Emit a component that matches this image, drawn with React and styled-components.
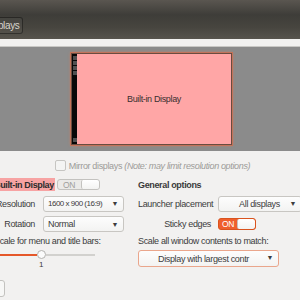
import styled, { createGlobalStyle } from 'styled-components';

const Global = createGlobalStyle`
  html, body {
    margin: 0;
    padding: 0;
    background: #f2f1f0;
    overflow: hidden;
  }
  body {
    font-family: "Liberation Sans", Arial, sans-serif;
    font-size: 9px;
    letter-spacing: -0.35px;
    color: #3c3c3c;
  }
`;

const Window = styled.div`
  width: 300px;
  height: 300px;
  overflow: hidden;
  display: flex;
  flex-direction: column;
`;

const HeaderBar = styled.div`
  height: 39px;
  flex: none;
  box-sizing: border-box;
  padding-top: 17px;
  background: linear-gradient(#5a5650 0%, #3e3d39 38%, #47453f 70%, #57544d 100%);
`;

const HeaderButton = styled.div`
  margin-left: -19px;
  width: 42px;
  height: 17px;
  box-sizing: border-box;
  border: 1px solid rgba(0, 0, 0, 0.4);
  border-radius: 3px;
  background: rgba(255, 255, 255, 0.03);
  color: #d8d4cc;
  font-size: 10px;
  display: flex;
  align-items: center;
  justify-content: center;
`;

const Strip = styled.div`
  height: 7px;
  flex: none;
  background: #f2f1f0;
`;

const Canvas = styled.div`
  height: 105px;
  flex: none;
  box-sizing: border-box;
  border-top: 1px solid #c9c8c5;
  background: #8b8b8b;
  display: flex;
  align-items: center;
  justify-content: center;
  padding-left: 3px;
`;

const Monitor = styled.div`
  width: 161px;
  height: 92px;
  box-sizing: border-box;
  border: 1px solid #6a4c40;
  box-shadow: 0 0 0 1px #c2735a, 0 0 3px #e07a52;
  background: #ffa6a6;
  display: flex;
`;

const Launcher = styled.div`
  width: 5px;
  background: #080808;
  display: flex;
  flex-direction: column;
  align-items: center;
  gap: 1px;
  padding: 2px 0 2px;
`;

const LauncherIcon = styled.div`
  width: 4px;
  height: 4px;
  background: #505050;
  margin-top: ${(p) => (p.$bottom ? 'auto' : '0')};
`;

const MonitorLabel = styled.div`
  flex: 1;
  display: flex;
  align-items: center;
  justify-content: center;
  font-size: 9px;
  color: #3a3030;
`;

const Content = styled.div`
  flex: 1;
  display: flex;
  flex-direction: column;
`;

const MirrorRow = styled.div`
  margin-top: 9px;
  height: 11px;
  display: flex;
  align-items: center;
  justify-content: center;
  gap: 3px;
  padding-left: 5px;
  color: #9c9b98;
`;

const Checkbox = styled.div`
  width: 9px;
  height: 9px;
  border: 1px solid #c6c5c2;
  border-radius: 2px;
  background: #f4f4f3;
`;

const Note = styled.span`
  font-style: italic;
`;

const Columns = styled.div`
  margin-top: 7px;
  display: flex;
  gap: 14px;
`;

const LeftColumn = styled.div`
  margin-left: -6px;
  width: 130px;
  flex: none;
  display: grid;
  grid-template-columns: 41px 81px;
  grid-template-rows: 13px 17px 16px 10px auto;
  column-gap: 8px;
  row-gap: 4px;
  align-items: center;
`;

const RightColumn = styled.div`
  flex: 1;
  display: grid;
  grid-template-columns: 73px 84px;
  grid-template-rows: 13px 17px 16px 10px auto;
  column-gap: 7px;
  row-gap: 4px;
  align-items: center;
`;

const NameRow = styled.div`
  grid-column: 1 / 3;
  display: flex;
  align-items: center;
  gap: 2px;
`;

const NameTag = styled.div`
  height: 13px;
  padding-right: 1px;
  background: #f7a3a3;
  font-weight: bold;
  color: #2c2c2c;
  display: flex;
  align-items: center;
  white-space: nowrap;
`;

const Heading = styled.div`
  grid-column: 1 / 3;
  font-weight: bold;
  color: #3a3a3a;
`;

const Label = styled.div`
  text-align: ${(p) => (p.$left ? 'left' : 'right')};
  white-space: nowrap;
`;

const Switch = styled.div`
  display: flex;
  height: ${(p) => (p.$on ? '12px' : '11px')};
  width: ${(p) => (p.$on ? '38px' : '43px')};
  box-sizing: border-box;
  border: 1px solid ${(p) => (p.$on ? '#d9531e' : '#c3c2bf')};
  border-radius: 3px;
  overflow: hidden;
  background: ${(p) => (p.$on ? '#ef5f2c' : '#ebeae8')};
  justify-self: start;
`;

const SwitchText = styled.div`
  flex: 1;
  display: flex;
  align-items: center;
  padding-left: ${(p) => (p.$on ? '3px' : '5px')};
  font-size: 8.5px;
  color: ${(p) => (p.$on ? '#ffffff' : '#a09f9c')};
`;

const Knob = styled.div`
  width: 17px;
  background: linear-gradient(#ffffff, #f3f3f2);
  border-left: 1px solid #c3c2bf;
  border-radius: 2px;
`;

const Select = styled.div`
  height: 16px;
  box-sizing: border-box;
  border: 1px solid ${(p) => (p.$focus ? '#eaa68c' : '#c8c6c2')};
  border-radius: 3px;
  background: linear-gradient(#fdfdfd, #f3f3f2);
  display: flex;
  align-items: center;
  padding: 0 5px 0 4px;
  justify-content: ${(p) => (p.$center ? 'center' : 'space-between')};
  position: relative;
  white-space: nowrap;
`;

const Tight = styled.span`
  font-size: 8px;
  letter-spacing: -0.5px;
`;

const Arrow = styled.span`
  font-size: 7px;
  color: #3c3c3c;
  ${(p) => (p.$abs ? 'position: absolute; right: 5px; top: 3px;' : '')}
`;

const ScaleLabel = styled.div`
  grid-column: 1 / 3;
  white-space: nowrap;
`;

const SliderBox = styled.div`
  grid-column: 1 / 3;
  margin-left: -6px;
  width: 107px;
  display: flex;
  flex-direction: column;
  align-items: flex-start;
  align-self: start;
`;

const Track = styled.div`
  width: 100%;
  height: 9px;
  display: flex;
  align-items: center;
`;

const Fill = styled.div`
  height: 2px;
  background: ${(p) => (p.$active ? '#e5582a' : '#d2d1ce')};
  flex: ${(p) => (p.$active ? 'none' : '1')};
  width: ${(p) => (p.$active ? '49px' : 'auto')};
`;

const Thumb = styled.div`
  width: 7px;
  height: 7px;
  flex: none;
  border: 1px solid #b3b2af;
  border-radius: 50%;
  background: #fbfbfb;
`;

const TickValue = styled.div`
  margin-left: 51px;
  font-size: 8px;
  margin-top: 1px;
`;

const WideSelect = styled(Select)`
  grid-column: 1 / 3;
  align-self: start;
  width: 141px;
  height: 17px;
  justify-content: flex-start;
  padding-left: 19px;
`;

const CornerButton = styled.div`
  margin-top: 11px;
  margin-left: -20px;
  width: 23px;
  height: 15px;
  border: 1px solid #c3c2bf;
  border-radius: 3px;
  background: #f7f7f6;
`;

export default function App() {
  return (
    <Window>
      <Global />
      <HeaderBar>
        <HeaderButton>Displays</HeaderButton>
      </HeaderBar>
      <Strip />
      <Canvas>
        <Monitor>
          <Launcher>
            <LauncherIcon />
            <LauncherIcon />
            <LauncherIcon />
            <LauncherIcon />
            <LauncherIcon $bottom />
          </Launcher>
          <MonitorLabel>Built-in Display</MonitorLabel>
        </Monitor>
      </Canvas>
      <Content>
        <MirrorRow>
          <Checkbox />
          <span>
            Mirror displays <Note>(Note: may limit resolution options)</Note>
          </span>
        </MirrorRow>
        <Columns>
          <LeftColumn>
            <NameRow>
              <NameTag>Built-in Display</NameTag>
              <Switch>
                <SwitchText>ON</SwitchText>
                <Knob />
              </Switch>
            </NameRow>
            <Label>Resolution</Label>
            <Select>
              <Tight>1600 x 900 (16:9)</Tight>
              <Arrow>▼</Arrow>
            </Select>
            <Label>Rotation</Label>
            <Select>
              <span>Normal</span>
              <Arrow>▼</Arrow>
            </Select>
            <ScaleLabel>Scale for menu and title bars:</ScaleLabel>
            <SliderBox>
              <Track>
                <Fill $active />
                <Thumb />
                <Fill />
              </Track>
              <TickValue>1</TickValue>
            </SliderBox>
          </LeftColumn>
          <RightColumn>
            <Heading>General options</Heading>
            <Label $left>Launcher placement</Label>
            <Select $center>
              <span>All displays</span>
              <Arrow $abs>▼</Arrow>
            </Select>
            <Label>Sticky edges</Label>
            <Switch $on>
              <SwitchText $on>ON</SwitchText>
              <Knob />
            </Switch>
            <ScaleLabel>Scale all window contents to match:</ScaleLabel>
            <WideSelect $focus>
              <span>Display with largest contr</span>
              <Arrow $abs>▼</Arrow>
            </WideSelect>
          </RightColumn>
        </Columns>
        <CornerButton />
      </Content>
    </Window>
  );
}
